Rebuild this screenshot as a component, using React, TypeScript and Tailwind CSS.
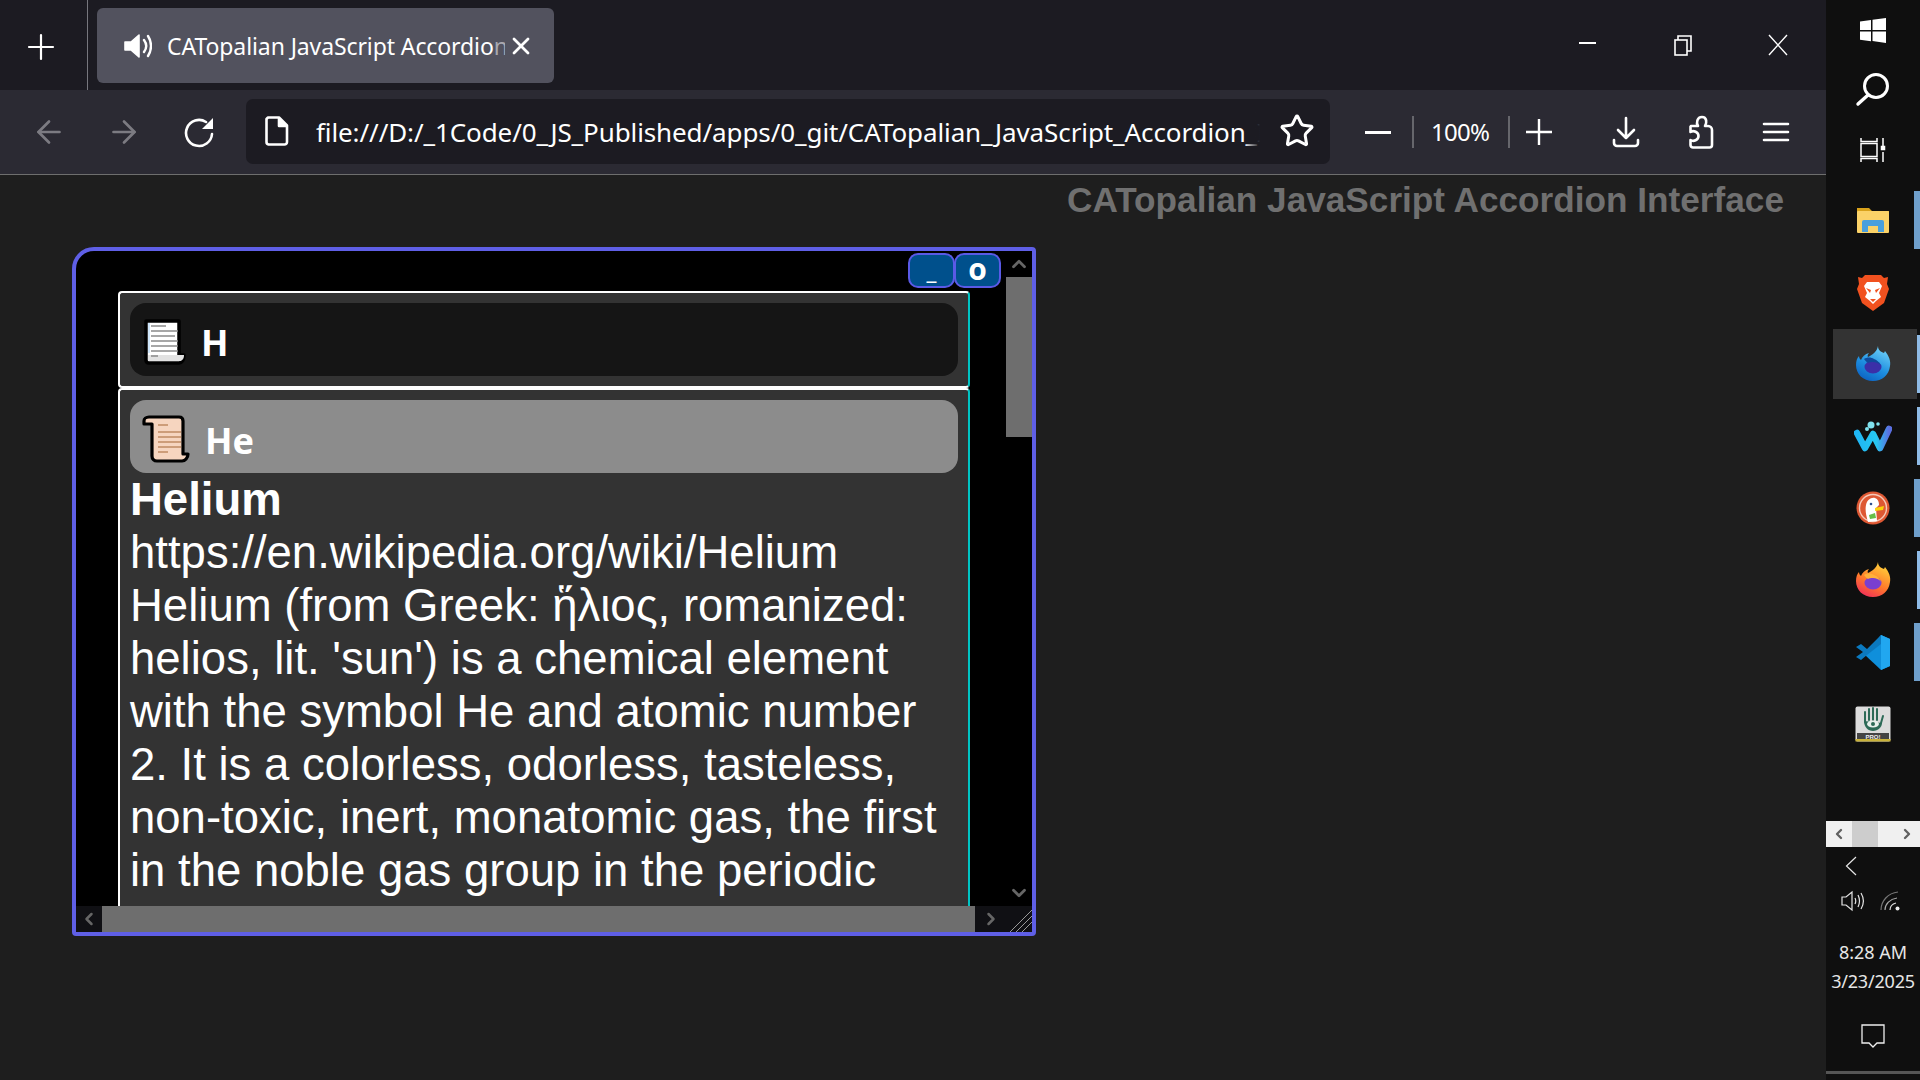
import type { ReactNode } from "react";
import { ArrowLeft, ArrowRight, X, Star, ChevronUp, ChevronDown, ChevronLeft, ChevronRight } from "lucide-react";

const indicatorTiles: { bar: string; active?: boolean; icon: ReactNode }[] = [
  { bar: "wide", icon: <FolderIcon /> },
  { bar: "none", icon: <BraveIcon /> },
  { bar: "thin", active: true, icon: <FoxIcon dev /> },
  { bar: "thin", icon: <WaveIcon /> },
  { bar: "wide", icon: <DuckIcon /> },
  { bar: "thin", icon: <FoxIcon /> },
  { bar: "wide", icon: <CodeIcon /> },
  { bar: "none", icon: <HandIcon /> },
];

function FolderIcon() {
  return (
    <svg width="34" height="28" viewBox="0 0 34 28">
      <path d="M1 2h12l3 3h17v5H1z" fill="#d9a21b" />
      <rect x="1" y="5" width="32" height="22" rx="1" fill="#fbd268" />
      <path d="M6 26V16a2 2 0 0 1 2-2h18a2 2 0 0 1 2 2v10h-6v-6H12v6z" fill="#4a9fdc" />
    </svg>
  );
}

function BraveIcon() {
  return (
    <svg width="32" height="37" viewBox="0 0 32 37">
      <path d="M8 1h16l3 3 4-1-1 7 2 5-5 14-11 8-11-8L0 15l2-5-1-7 4 1z" fill="#f1511f" />
      <path d="M10 8h12l3 4-3 7 2 4-5 4-3 3-3-3-5-4 2-4-3-7z" fill="#fff" />
      <path d="M9 14l5 2-1 3zM23 14l-5 2 1 3zM13 25h6l-3 3z" fill="#f1511f" />
    </svg>
  );
}

function FoxIcon({ dev = false }: { dev?: boolean }) {
  const id = dev ? "foxDev" : "foxRel";
  return (
    <svg width="36" height="36" viewBox="0 0 36 36">
      <defs>
        <linearGradient id={id} x1="0.7" y1="0" x2="0.2" y2="1">
          <stop offset="0" stopColor={dev ? "#6fd0f8" : "#ffd23a"} />
          <stop offset="0.55" stopColor={dev ? "#1e8fe0" : "#ff7a2a"} />
          <stop offset="1" stopColor={dev ? "#0b5fc0" : "#f02a5c"} />
        </linearGradient>
      </defs>
      <path d="M23 0c0 4 3 6 6 7l1-2c4 5 6 10 5 15-1 9-8 15-17 15C8 35 1 28 1 19c0-4 1-7 3-9 0 2 1 3 2 4 1-3 4-6 8-7-1 1-2 3-1 4 4-2 9-5 10-11z" fill={`url(#${id})`} />
      <ellipse cx="18" cy="21" rx="8.5" ry="6.5" fill={dev ? "#3b2fa8" : "#7a3fd0"} />
      <path d="M9 13c3-2 7-2 10 0 3 1 6 4 7 7-2-3-5-4-8-4-2 0-4 0-5 1-2-1-3-3-4-4z" fill={dev ? "#0f4a9c" : "#ffb13a"} />
    </svg>
  );
}

function WaveIcon() {
  return (
    <svg width="38" height="34" viewBox="0 0 38 34">
      <defs>
        <linearGradient id="waveGrad" x1="0" y1="0" x2="1" y2="0">
          <stop offset="0" stopColor="#1fb6f5" />
          <stop offset="0.6" stopColor="#26c8f0" />
          <stop offset="1" stopColor="#5b6fe0" />
        </linearGradient>
      </defs>
      <path d="M3 14l8 15 8-14 7 14 9-19" fill="none" stroke="url(#waveGrad)" strokeWidth="6.5" strokeLinecap="round" strokeLinejoin="round" />
      <circle cx="17" cy="6" r="3.5" fill="#7fe0ec" />
      <circle cx="13" cy="10" r="2" fill="#7fe0ec" />
      <circle cx="24" cy="5" r="1.8" fill="#7fe0ec" />
    </svg>
  );
}

function DuckIcon() {
  return (
    <svg width="34" height="34" viewBox="0 0 34 34">
      <circle cx="17" cy="17" r="16.5" fill="#de5833" />
      <circle cx="17" cy="17" r="13.5" fill="none" stroke="#f6c9b8" strokeWidth="1.4" />
      <path d="M12 31c-2-7-3-12-2-17 1-5 5-8 9-7 3 1 4 4 4 7l-3 3 1 13z" fill="#fff" />
      <circle cx="15" cy="13" r="1.3" fill="#2d4f8e" />
      <path d="M19 17l9-2-1 4-8 1z" fill="#fdd20a" />
      <path d="M13 24l6-2 1 5-6 1z" fill="#67bd47" />
    </svg>
  );
}

function CodeIcon() {
  return (
    <svg width="36" height="37" viewBox="0 0 36 37">
      <path d="M26 1l9 4v27l-9 4L10 21z" fill="#0f8fdb" />
      <path d="M26 1l9 4v27l-9 4z" fill="#21a7f0" />
      <path d="M26 10L12 21l-6 5-5-3 7-5-7-5 5-3 6 5L26 1z" fill="#0b79bf" />
    </svg>
  );
}

function HandIcon() {
  return (
    <svg width="36" height="36" viewBox="0 0 36 36">
      <rect x="0.5" y="0.5" width="35" height="35" rx="2" fill="#dcdcdc" />
      <path d="M10 16V6M14 14V3M18 14V2M22 14V3M26 17l2-7" stroke="#2d6a57" strokeWidth="2" strokeLinecap="round" />
      <path d="M9 15c0 6 4 10 9 10s9-4 9-8l-18-2z" fill="#2d6a57" />
      <ellipse cx="18" cy="18" rx="6" ry="3.5" fill="#e8f0ec" />
      <circle cx="18" cy="18" r="2" fill="#2d6a57" />
      <rect x="2" y="27" width="32" height="6" fill="#444" />
      <rect x="0.5" y="33" width="35" height="2.5" fill="#c9b23a" />
      <text x="18" y="32.5" textAnchor="middle" fontSize="6" fontWeight="700" fill="#eee" fontFamily="Liberation Sans, sans-serif">PRO!</text>
    </svg>
  );
}

function PageEmoji() {
  return (
    <svg width="44" height="48" viewBox="0 0 44 48" className="mt-[2px]">
      <path d="M4 4h33v34h5c0 5-2 8-5 8H7c-2 0-3-1-3-3z" fill="#fff" stroke="#000" strokeWidth="3.5" strokeLinejoin="round" />
      <path d="M6 38h36c0 4-2 6-5 6H7c-1 0-1-1-1-2z" fill="#e2e2e2" />
      <path d="M9 9h15M9 14h27M9 19h24M9 24h27M9 29h27M9 34h27M9 39h7" stroke="#8b8b8b" strokeWidth="1.6" />
      <path d="M6 6h2v30H6z" fill="#cfe6fb" />
    </svg>
  );
}

function ScrollEmoji() {
  return (
    <svg width="48" height="48" viewBox="0 0 48 48" className="mt-[5px]">
      <path d="M2 6c0-2 2-4 5-4h30c3 0 4 2 4 4v33h5c0 4-3 7-6 7H15c-3 0-5-2-5-5V9H2z" fill="#f6d5bf" stroke="#000" strokeWidth="3.2" strokeLinejoin="round" />
      <path d="M16 10h10M16 17h23M16 22h23M16 27h23M16 32h23M16 37h10" stroke="#c08a63" strokeWidth="1.7" />
    </svg>
  );
}

function Tile({ bar, active, children }: { bar: string; active?: boolean; children: ReactNode }) {
  return (
    <div className="h-[72px] flex items-center pl-[7px] relative">
      <div className={active ? "w-[84px] h-[70px] pr-[4px] bg-[#333333] flex items-center justify-center" : "w-[84px] h-[70px] pr-[4px] flex items-center justify-center"}>
        {children}
      </div>
      {bar === "wide" && <div className="absolute right-0 top-[7px] w-[6px] h-[58px] bg-[#6f9fcb]" />}
      {bar === "thin" && <div className="absolute right-0 top-[7px] w-[3px] h-[58px] bg-[#8fbbe6]" />}
    </div>
  );
}

function Taskbar() {
  return (
    <aside className="w-[94px] h-[1080px] bg-[#0f0f0f] flex flex-col text-[#e6e6e6]">
      <div className="h-[60px] flex items-center justify-center pt-[1px]">
        <svg width="26" height="25" viewBox="0 0 26 25" fill="#fff">
          <path d="M0 3.5l11-1.6V12H0zM12.5 1.7L26 0v12H12.5zM0 13.5h11v9.8L0 21.8zM12.500 13.5H26V25l-13.5-1.9z" />
        </svg>
      </div>
      <div className="h-[60px] flex items-center justify-center">
        <svg width="36" height="36" viewBox="0 0 36 36" fill="none" stroke="#fff" strokeWidth="3">
          <circle cx="21" cy="14" r="11.5" />
          <path d="M13 23l-10 9" strokeLinecap="round" strokeWidth="3.4" />
        </svg>
      </div>
      <div className="h-[64px] flex items-center justify-center pb-[4px]">
        <svg width="26" height="24" viewBox="0 0 26 24" fill="none" stroke="#fff" strokeWidth="1.5">
          <path d="M1 0v3.5h16V0M1 24v-3.5h16V24" />
          <rect x="1" y="5.5" width="16" height="13" />
          <path d="M23 0v8M23 14v10" />
          <rect x="21.5" y="8.5" width="3" height="3" fill="#fff" />
        </svg>
      </div>
      {indicatorTiles.map((t, i) => (
        <Tile key={i} bar={t.bar} active={t.active}>
          {t.icon}
        </Tile>
      ))}
      <div className="mt-[61px] h-[26px] bg-[#f0f0f0] flex items-center text-[#606060]">
        <ChevronLeft size={16} strokeWidth={3.5} className="ml-[5px]" />
        <div className="ml-[5px] w-[26px] h-full bg-[#cdcdcd]" />
        <div className="flex-1" />
        <ChevronRight size={16} strokeWidth={3.5} className="mr-[5px]" />
      </div>
      <div className="h-[38px] flex items-center pl-[19px]">
        <svg width="12" height="20" viewBox="0 0 12 20" fill="none" stroke="#e6e6e6" strokeWidth="1.2">
          <path d="M11 1L1.5 10l9.5 9" />
        </svg>
      </div>
      <div className="h-[32px] flex items-center justify-between pl-[15px] pr-[18px]">
        <svg width="24" height="22" viewBox="0 0 24 22" fill="none" stroke="#e6e6e6" strokeWidth="1.2">
          <path d="M1 7h4l6-5v18l-6-5H1zM14 8c1 2 1 4 0 6M17 5c2 4 2 8 0 12M20 3c3 5 3 11 0 16" />
        </svg>
        <svg width="22" height="20" viewBox="0 0 22 20" fill="none">
          <path d="M1 19C1 10 8 2 18 1" stroke="#777" strokeWidth="1.2" />
          <path d="M5 19c0-6 5-11 12-12" stroke="#aaa" strokeWidth="1.2" />
          <path d="M10 19c0-3 2-6 6-7" stroke="#ddd" strokeWidth="1.2" />
          <circle cx="17.5" cy="17.5" r="2" fill="#eee" />
        </svg>
      </div>
      <div className="mt-[21px] text-center text-[18px] leading-[29px] font-['Noto_Sans',sans-serif]">
        <div>8:28 AM</div>
        <div className="-mx-1 tracking-[-0.2px]">3/23/2025</div>
      </div>
      <div className="mt-[28px] flex justify-center">
        <svg width="24" height="24" viewBox="0 0 24 24" fill="none" stroke="#eee" strokeWidth="1.3">
          <path d="M1 1h22v18h-7l-4 4-4-4H1z" />
        </svg>
      </div>
      <div className="mt-[23px] h-[3px] bg-[#555555]" />
    </aside>
  );
}

function TabBar() {
  return (
    <div className="h-[90px] bg-[#1c1b22] flex text-white">
      <div className="w-[88px] flex items-center justify-center border-r border-[#77777e] pr-[6px] pt-[3px]">
        <svg width="28" height="28" viewBox="0 0 28 28" stroke="#fff" strokeWidth="2.2" strokeLinecap="round">
          <path d="M14 2v24M2 14h24" />
        </svg>
      </div>
      <div className="ml-[9px] mt-[8px] w-[457px] h-[75px] bg-[#52525e] rounded-[6px] flex items-center pl-[27px]">
        <svg width="28" height="26" viewBox="0 0 28 26" className="shrink-0">
          <path d="M1 9h6l8-7v22l-8-7H1z" fill="#fff" stroke="#fff" strokeWidth="1.6" strokeLinejoin="round" />
          <path d="M20 7c3 4 3 8 0 12M24 3c4 6 4 14 0 20" fill="none" stroke="#fff" strokeWidth="2.4" strokeLinecap="round" />
        </svg>
        <span className="ml-[15px] pt-[2px] w-[338px] whitespace-nowrap overflow-hidden text-[23px] tracking-[-0.1px] font-['Noto_Sans',sans-serif]">
          CATopalian JavaScript Accordio<span className="text-[#a8a8b0]">n</span>
        </span>
        <X size={28} strokeWidth={2.4} className="ml-[2px] shrink-0" />
      </div>
      <div className="flex-1" />
      <div className="flex items-center">
        <div className="w-[17px] h-[1.5px] bg-white mr-[78px] mb-[4px]" />
        <svg width="18" height="22" viewBox="0 0 18 22" fill="none" stroke="#fff" strokeWidth="1.6" className="mr-[76px] mt-[2px]">
          <rect x="1" y="5" width="12" height="15" />
          <path d="M4 5V1h13v15h-4" />
        </svg>
        <svg width="20" height="22" viewBox="0 0 20 22" fill="none" stroke="#fff" strokeWidth="1.4" className="mr-[38px]">
          <path d="M1 1l18 20M19 1L1 21" />
        </svg>
      </div>
    </div>
  );
}

function Toolbar() {
  return (
    <div className="h-[85px] bg-[#2b2a33] border-b border-[#6e6e6e] flex items-center text-white">
      <ArrowLeft size={36} strokeWidth={1.8} className="ml-[31px] text-[#7c7b82]" />
      <ArrowRight size={36} strokeWidth={1.8} className="ml-[39px] text-[#7c7b82]" />
      <svg width="32" height="32" viewBox="0 0 32 32" fill="none" className="ml-[41px]">
        <path d="M23 6a13 13 0 1 0 6 12" stroke="#fff" strokeWidth="2.6" strokeLinecap="round" />
        <path d="M30 2v11H19z" fill="#fff" />
      </svg>
      <div className="ml-[31px] w-[1084px] h-[65px] mb-[2px] bg-[#1c1b22] rounded-[7px] flex items-center relative">
        <svg width="24" height="30" viewBox="0 0 24 30" fill="none" stroke="#fff" strokeWidth="2.6" strokeLinejoin="round" className="ml-[19px] shrink-0">
          <path d="M3 1.5h11l8 8V26a2.5 2.5 0 0 1-2.5 2.5h-16A2.5 2.5 0 0 1 1.500 26V3z" />
          <path d="M14 2v8h8" fill="#fff" />
        </svg>
        <div className="ml-[27px] pt-[2px] w-[944px] overflow-hidden whitespace-nowrap text-[26px] tracking-[-0.1px] font-['Noto_Sans',sans-serif] relative">
          file:///D:/_1Code/0_JS_Published/apps/0_git/CATopalian_JavaScript_Accordion_Interface
          <div className="absolute right-0 top-0 bottom-0 w-[16px] bg-gradient-to-r from-transparent to-[#1c1b22]" />
        </div>
        <Star size={36} strokeWidth={2} className="ml-[19px] shrink-0" />
      </div>
      <div className="ml-[35px] w-[26px] h-[3px] bg-white" />
      <div className="ml-[21px] w-[2px] h-[32px] bg-[#66666c]" />
      <span className="ml-[17px] text-[24px] tracking-[-0.7px] font-['Noto_Sans',sans-serif]">100%</span>
      <div className="ml-[19px] w-[2px] h-[32px] bg-[#66666c]" />
      <svg width="26" height="26" viewBox="0 0 26 26" stroke="#fff" strokeWidth="2.4" className="ml-[16px]">
        <path d="M13 0v26M0 13h26" />
      </svg>
      <svg width="28" height="32" viewBox="0 0 28 32" fill="none" stroke="#fff" strokeWidth="2.6" strokeLinecap="round" strokeLinejoin="round" className="ml-[60px]">
        <path d="M14 2v20M6 14l8 8 8-8M2 24v3a3 3 0 0 0 3 3h18a3 3 0 0 0 3-3v-3" />
      </svg>
      <svg width="26" height="34" viewBox="0 0 26 34" fill="none" stroke="#fff" strokeWidth="2.6" strokeLinejoin="round" className="ml-[48px]">
        <path d="M3 11h7c-2-3-1-9 4-9s5 6 3 9h3a4 4 0 0 1 4 4v15a2.500 2.500 0 0 1-2.500 2.500H5A2.500 2.500 0 0 1 2.500 30v-5c3 2 8 0 8-4s-5-6-8-4v-4a2 2 0 0 1 .5-2z" />
      </svg>
      <svg width="28" height="22" viewBox="0 0 28 22" stroke="#fff" strokeWidth="2.600" className="ml-[48px]">
        <path d="M2 3h24M2 11h24M2 19h24" strokeLinecap="round" />
      </svg>
    </div>
  );
}

function AccordionPanel() {
  return (
    <div className="ml-[72px] mt-[27px] w-[964px] h-[689px] border-[4px] border-[#5f5fe6] rounded-tl-[22px] rounded-tr-[4px] rounded-b-[4px] bg-black flex flex-col relative overflow-hidden">
      <div className="absolute right-[31px] top-[2px] flex z-10">
        <div className="w-[47px] h-[35px] bg-[#00508c] border-2 border-[#5a5ae6] rounded-[10px] text-white font-bold text-[24px] leading-[30px] text-center font-['Open_Sans',sans-serif]">_</div>
        <div className="w-[47px] h-[35px] -ml-px bg-[#00508c] border-2 border-[#5a5ae6] rounded-[10px] text-white font-bold text-[30px] leading-[27px] text-center font-['Open_Sans',sans-serif]">o</div>
      </div>
      <div className="flex-1 flex min-h-0">
        <div className="flex-1 overflow-hidden pl-[42px] pt-[40px] pr-[36px]">
          <div className="h-[97px] bg-[#333333] border-2 border-white border-r-[#00c4c4] rounded-[4px] px-[10px] pt-[10px]">
            <div className="h-[73px] bg-[#151515] rounded-[16px] flex items-center pl-[12px] font-['Noto_Sans',sans-serif] font-bold text-[36px] text-white">
              <PageEmoji />
              <span className="ml-[15px] pt-[6px]">H</span>
            </div>
          </div>
          <div className="bg-[#333333] border-2 border-white border-r-[#00c4c4] rounded-[4px] px-[10px] pt-[10px] pb-[60px]">
            <div className="h-[73px] bg-[#8c8c8c] rounded-[16px] flex items-center pl-[12px] font-['Noto_Sans',sans-serif] font-bold text-[36px] text-white">
              <ScrollEmoji />
              <span className="ml-[15px] pt-[8px]">He</span>
            </div>
            <div className="text-[45.5px] leading-[53px] text-white font-['Liberation_Sans',sans-serif]">
              <div className="font-bold">Helium</div>
              <div>https://en.wikipedia.org/wiki/Helium</div>
              <div>
                Helium (from Greek: ἥλιος, romanized: helios, lit. 'sun') is a chemical element with the symbol He and atomic number 2. It is a colorless, odorless, tasteless, non-toxic, inert, monatomic gas, the first in the noble gas group in the periodic
              </div>
            </div>
          </div>
        </div>
        <div className="w-[26px] flex flex-col bg-black text-[#666666]">
          <div className="h-[26px] flex items-center justify-center">
            <ChevronUp size={22} strokeWidth={3} />
          </div>
          <div className="h-[160px] bg-[#6e6e6e]" />
          <div className="flex-1" />
          <div className="h-[26px] flex items-center justify-center">
            <ChevronDown size={22} strokeWidth={3} />
          </div>
        </div>
      </div>
      <div className="h-[26px] flex shrink-0">
        <div className="w-[26px] bg-[#101014] flex items-center justify-center text-[#666666]">
          <ChevronLeft size={20} strokeWidth={3} />
        </div>
        <div className="w-[873px] bg-[#6e6e6e]" />
        <div className="w-[31px] bg-[#101014] flex items-center justify-center text-[#666666]">
          <ChevronRight size={20} strokeWidth={3} />
        </div>
        <div className="w-[26px] bg-[#101014]">
          <svg width="26" height="26" viewBox="0 0 26 26" stroke="#9a9a9a" strokeWidth="1">
            <path d="M4 26L26 4M10 26L26 10M16 26L26 16" />
          </svg>
        </div>
      </div>
    </div>
  );
}

export default function App() {
  return (
    <div className="w-[1920px] h-[1080px] overflow-hidden flex bg-[#0f0f0f]">
      <div className="w-[1826px] flex flex-col">
        <TabBar />
        <Toolbar />
        <main className="flex-1 bg-[#1e1e1e]">
          <h1 className="mt-[5px] pr-[42px] h-[40px] text-right font-bold text-[35.2px] leading-[40px] text-[#707070] font-['Liberation_Sans',sans-serif]">
            CATopalian JavaScript Accordion Interface
          </h1>
          <AccordionPanel />
        </main>
      </div>
      <Taskbar />
    </div>
  );
}
